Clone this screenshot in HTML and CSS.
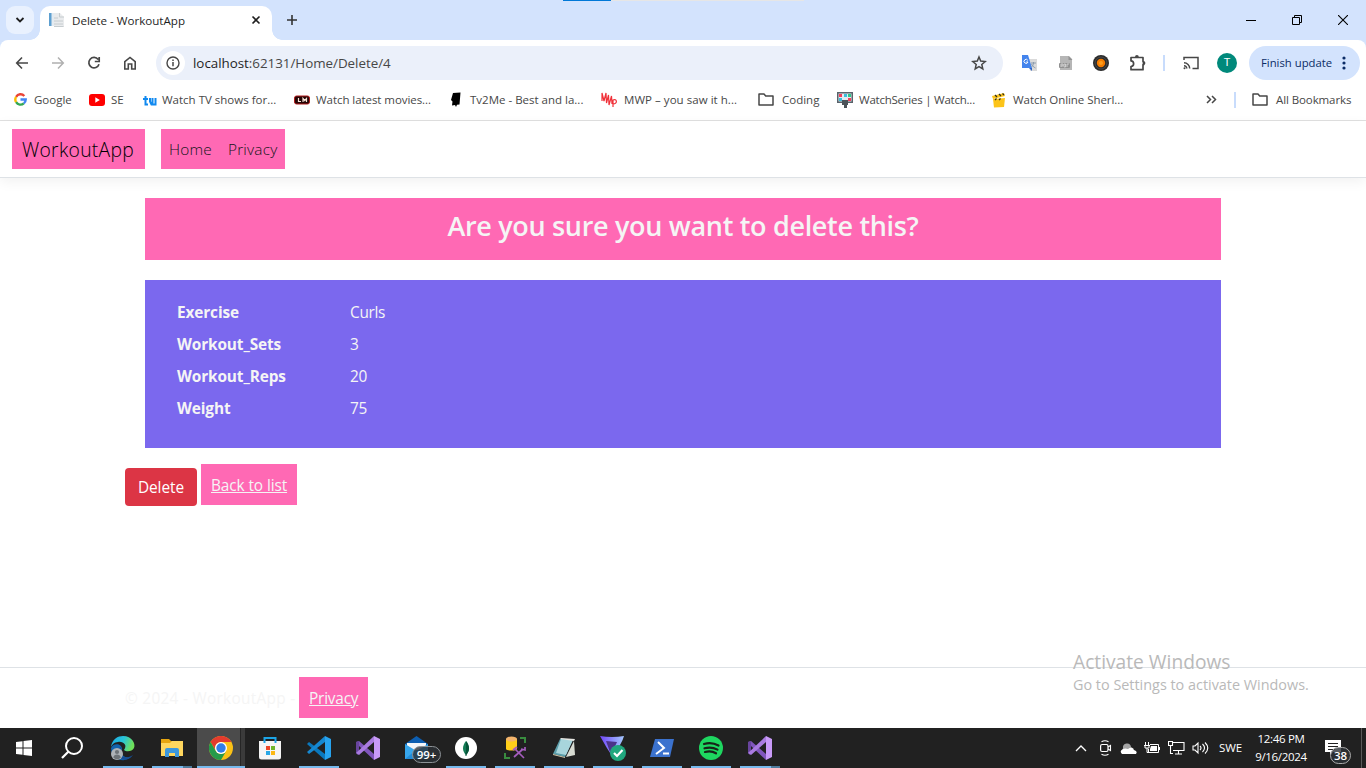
FILE: index.html
```html
<!DOCTYPE html>
<html lang="en">
<head>
<meta charset="utf-8">
<title>Delete - WorkoutApp</title>
<link rel="stylesheet" href="styles.css">
</head>
<body>
<div class="screen">
  <header class="tabstrip">
    <button class="tab-search" aria-label="Search tabs"><svg width="10" height="8" viewBox="0 0 10 8"><path d="M1.500 2 5 5.400 8.500 2" fill="none" stroke="#1f1f1f" stroke-width="1.800"/></svg></button>
    <div class="tab">
      <svg width="16" height="16" viewBox="0 0 16 16"><path d="M1 1h7v13H1z" fill="#e4ebf1"/><path d="M1 1h2.500v13H1z" fill="#5d9fd0"/><path d="M5 1h7l4 4v10H6V1" fill="#e9ebed"/><path d="M11.500 1v4H16M6 6h4M6 9h9M6 12h9M6 14.500h9.500" stroke="#c6cccf" fill="none"/></svg>
      <span class="tab-title">Delete - WorkoutApp</span>
      <svg class="tab-close" width="10" height="10" viewBox="0 0 10 10"><path d="m1.500 1.500 7 7m0-7-7 7" stroke="#1f1f1f" stroke-width="1.600"/></svg>
    </div>
    <svg class="new-tab" width="12" height="12" viewBox="0 0 12 12"><path d="M6 1v10M1 6h10" stroke="#333" stroke-width="1.600"/></svg>
    <div class="window-buttons">
      <svg width="10" height="10" viewBox="0 0 10 10"><path d="M0 5.500h10" stroke="#000"/></svg>
      <svg width="10" height="10" viewBox="0 0 10 10"><path d="M.5 2.500h7v7h-7zM2.500 2.500v-2h7v7h-2" fill="none" stroke="#000"/></svg>
      <svg width="10" height="10" viewBox="0 0 10 10"><path d="m0 0 10 10M10 0 0 10" stroke="#000" stroke-width="1.100"/></svg>
    </div>
    <div class="progress"></div>
  </header>

  <div class="toolbar">
    <nav class="nav-icons">
      <svg width="14" height="14" viewBox="0 0 14 14"><path d="M7 1.500 1.700 7 7 12.500M2 7h11" fill="none" stroke="#474747" stroke-width="1.600"/></svg>
      <svg width="14" height="14" viewBox="0 0 14 14"><path d="M7 1.500 12.300 7 7 12.500M12 7H1" fill="none" stroke="#b0b0b0" stroke-width="1.500"/></svg>
      <svg width="14" height="14" viewBox="0 0 14 14"><path d="M11.200 3.500A5.200 5.200 0 1 0 12 8.200M12.200 1v4.500H7.800" fill="none" stroke="#474747" stroke-width="1.700"/></svg>
      <svg width="14" height="14" viewBox="0 0 14 14"><path d="M1.800 13V5.700L7 1.500l5.200 4.200V13H8.700V8H5.300v5z" fill="none" stroke="#474747" stroke-width="1.600"/></svg>
    </nav>
    <div class="address">
      <span class="info"><svg width="14" height="14" viewBox="0 0 14 14"><circle cx="7" cy="7" r="6" fill="none" stroke="#474747" stroke-width="1.400"/><path d="M7 6v4.200M7 3.600v1.500" stroke="#474747" stroke-width="1.500"/></svg></span>
      <span class="url"><b>localhost</b>:62131/Home/Delete/4</span>
      <svg class="star" width="16" height="16" viewBox="0 0 16 16"><path d="m8 2 1.700 4.100 4.500.4-3.400 3 1 4.400L8 11.600l-3.800 2.300 1-4.400-3.400-3 4.500-.4z" fill="none" stroke="#474747" stroke-width="1.500"/></svg>
    </div>
    <div class="extensions">
      <svg width="17" height="17" viewBox="0 0 17 17"><path d="M7 4h9v12H9z" fill="#dadada"/><path d="M1 0h6l4 13H1z" fill="#4384ed"/><path d="m8 13 3 3v-3z" fill="#3065c4"/><path d="M6.800 5.300A2 2 0 1 0 7 7H5.200" fill="none" stroke="#fff" stroke-width="1"/><path d="M10 8h5m-2.500-1v1c0 2-1 3-2 4m0-3c1 2 2 3 4 4" stroke="#8c9cad" fill="none"/></svg>
      <svg width="16" height="16" viewBox="0 0 16 16"><path d="M2 1h9l3 3v11H2z" fill="#b6b6b6"/><path d="m10.500 1 4 4h-4z" fill="#929292"/><rect x="1" y="8" width="11" height="5" rx="1" fill="#909090"/><path d="M3 12V9h2v2H3M6 12V9h1.500v3H6M9 12V9h2" fill="none" stroke="#ddd" stroke-width=".8"/></svg>
      <svg width="16" height="16" viewBox="0 0 16 16"><circle cx="8" cy="8" r="8" fill="#2b2b2b"/><circle cx="8" cy="8" r="6" fill="none" stroke="#4a4a4a"/><circle cx="8" cy="8" r="4.200" fill="#f57c00"/><circle cx="8" cy="8" r="2" fill="#ff9d1c"/></svg>
      <svg width="18" height="18" viewBox="0 0 18 18"><path d="M2 3.500h12v4h.500v3.200H14v5H2v-3.200c3.500-.4 3.500-5.200 0-5.600z" fill="none" stroke="#474747" stroke-width="1.700" stroke-linejoin="round"/><path d="M6 3a1.900 1.900 0 0 1 3.800 0zM14.500 7.200a1.900 1.900 0 0 1 0 3.800z" fill="#474747"/></svg>
      <i class="sep"></i>
      <svg width="16" height="14" viewBox="0 0 16 14"><path d="M1 4V1.500h14v11H9.500M1 6.800a5.700 5.700 0 0 1 5.700 5.700M1 9.700a2.800 2.800 0 0 1 2.800 2.800" fill="none" stroke="#474747" stroke-width="1.500"/><circle cx="1.500" cy="12.300" r="1" fill="#474747"/></svg>
      <span class="avatar">T</span>
    </div>
    <div class="update"><span>Finish update</span><svg width="4" height="14" viewBox="0 0 4 14" fill="#0b2c66"><circle cx="2" cy="2" r="1.600"/><circle cx="2" cy="7" r="1.600"/><circle cx="2" cy="12" r="1.600"/></svg></div>
  </div>

  <div class="bookmarks">
    <div class="bm bm-google"><svg width="13" height="13" viewBox="0 0 13 13" fill="none" stroke-width="2.400"><path d="M2.100 3.800A5.100 5.100 0 0 1 10.300 3" stroke="#ea4335"/><path d="M2.100 3.800a5.200 5.200 0 0 0 0 5.400" stroke="#fbbc05"/><path d="M2.100 9.200a5.100 5.100 0 0 0 7.700 1.200" stroke="#34a853"/><path d="M6.500 6.500h5.200c0 1.700-.7 3-1.900 3.900" stroke="#4285f4"/></svg><span>Google</span></div>
    <div class="bm bm-se"><svg width="16" height="12" viewBox="0 0 16 12"><rect width="16" height="12" rx="3" fill="#f00"/><path d="m6.300 3.300 4.500 2.700-4.500 2.700z" fill="#fff"/></svg><span>SE</span></div>
    <div class="bm bm-tv"><svg class="low" width="14" height="10" viewBox="0 0 14 10" fill="none" stroke="#1089f0" stroke-width="2"><path d="M2.500 0v8.500H5M0 3h5M7 2v3.500l1.500 3L12.500 8.500V2M9.500 2v6"/></svg><span>Watch TV shows for...</span></div>
    <div class="bm bm-lm"><svg width="16" height="10" viewBox="0 0 16 10"><rect x=".5" y="1" width="15" height="8" rx="2" fill="#250505" stroke="#b01c1c"/><path d="M4.500 3v3.500H7M9 7V3.500l1.700 2 1.800-2V7" fill="none" stroke="#f7e5d8" stroke-width="1.200"/></svg><span>Watch latest movies...</span></div>
    <div class="bm bm-me"><svg width="16" height="16" viewBox="0 0 16 16"><path d="m5 1 7.500-.6-1 12-2.500.4-1 2.200-1-2-3 .4.500-4L3 8z" fill="#000"/></svg><span>Tv2Me - Best and la...</span></div>
    <div class="bm bm-mwp"><svg width="17" height="16" viewBox="0 0 17 16" fill="none" stroke="#f03038" stroke-width="1.200"><path d="M1 9V1l2 8 2-8 .5 10L7.500 3 8 13l2.500-9 .5 8M12 15V8c4-2 5 4 0 4"/></svg><span>MWP – you saw it h...</span></div>
    <div class="bm bm-coding"><svg width="16" height="13" viewBox="0 0 16 13"><path d="M1 1h5l1.700 2H15v9H1z" fill="none" stroke="#474747" stroke-width="1.500" stroke-linejoin="round"/></svg><span>Coding</span></div>
    <div class="bm bm-series"><svg width="16" height="16" viewBox="0 0 16 16"><path d="M0 0h16v11H0z" fill="#59636b"/><path d="M1.500 1.500h13v8h-13z" fill="#e2eaf0"/><path d="M2 2h3v3H2zM11 6h3v3h-3z" fill="#f33e5b"/><path d="M7 2h3v3H7zM2 6h3v3H2z" fill="#3bbcdc"/><path d="M11 2h3v3h-3z" fill="#2fc78a"/><path d="M5 8h6v5h-1v3H7v-3H5z" fill="#4b5359"/></svg><span>WatchSeries | Watch...</span></div>
    <div class="bm bm-online"><svg width="14" height="16" viewBox="0 0 14 16"><path d="m1 7 12-1-1 9-10 .5z" fill="#fcc419"/><path d="m0 4 12-3 1 3L1 7z" fill="#fcc419"/><path d="m3 3 2 2M7 2l2 2M10.500 1.500l1.500 1.500M3 8l1.500-1.500M7 8l1.500-1.500" stroke="#302b19" stroke-width="1.200"/></svg><span>Watch Online Sherl...</span></div>
    <svg class="more" width="11" height="9" viewBox="0 0 11 9"><path d="m1 1 3.500 3.500L1 8m5-7 3.500 3.500L6 8" fill="none" stroke="#474747" stroke-width="1.500"/></svg>
    <i class="sep"></i>
    <div class="bm bm-all"><svg width="16" height="13" viewBox="0 0 16 13"><path d="M1 1h5l1.700 2H15v9H1z" fill="none" stroke="#474747" stroke-width="1.500" stroke-linejoin="round"/></svg><span>All Bookmarks</span></div>
  </div>

  <div class="page">
    <nav class="navbar"><a class="brand">WorkoutApp</a><div class="nav-links"><a>Home</a><a>Privacy</a></div></nav>
    <main class="main">
      <h3 class="question">Are you sure you want to delete this?</h3>
      <dl class="details">
        <dt>Exercise</dt><dd>Curls</dd>
        <dt>Workout_Sets</dt><dd>3</dd>
        <dt>Workout_Reps</dt><dd>20</dd>
        <dt>Weight</dt><dd>75</dd>
      </dl>
      <div class="actions"><button class="delete">Delete</button><a class="pink-link back">Back to list</a></div>
    </main>
    <footer class="footer"><span>© 2024 - WorkoutApp -</span><a class="pink-link privacy">Privacy</a></footer>
    <div class="activate"><p class="activate-title">Activate Windows</p><p class="activate-text">Go to Settings to activate Windows.</p></div>
  </div>

  <div class="taskbar">
    <div class="apps">
      <div class="app start"><svg width="16" height="16" viewBox="0 0 16 16" fill="#fff"><path d="m0 2 6.500-.8v6.300H0zM7.500 1 16 0v7.500H7.500zM0 8.500h6.500v6.300L0 14zM7.500 8.500H16V16l-8.500-1z"/></svg></div>
      <div class="app search"><svg width="22" height="22" viewBox="0 0 22 22"><circle cx="13" cy="9" r="8" fill="none" stroke="#fff" stroke-width="2"/><path d="M7.300 14.700 1 21" stroke="#fff" stroke-width="2.200"/></svg></div>
      <div class="app open"><svg width="26" height="26" viewBox="0 0 26 26"><defs><linearGradient id="ea" x1="0" x2="1" y2=".3"><stop stop-color="#1ca8e5"/><stop offset=".55" stop-color="#28c4d9"/><stop offset="1" stop-color="#6fe05a"/></linearGradient></defs><path d="M1 13a12 12 0 0 0 20 9c-7 2-11-3-9-8 0-5-8-7-11-1z" fill="#1263ad"/><path d="M11 16c0 7 6 8 12 4-3 5-10 6-14 3-4-5-2-10 2-11z" fill="#174d93"/><path d="M1 12C2 4 8 1 13 1c9 0 13 8 11 12-2 4-8 4-10 2 4-5-1-9-6-8-4 0-6 3-7 5z" fill="url(#ea)"/><circle cx="7" cy="19" r="6" fill="#aeb3b7"/><circle cx="7" cy="17" r="2.100" fill="#6d7377"/><path d="M3.300 22.500c.5-4 7-4 7.500 0-2 2.400-5.500 2.400-7.500 0" fill="#6d7377"/></svg></div>
      <div class="app open multi"><svg width="22" height="20" viewBox="0 0 22 20"><path d="M0 1h8l2 2h11v15H0z" fill="#e7a610"/><path d="M0 5h9l2-2h11v15H0z" fill="#ffd75e"/><path d="M4 19v-7a2 2 0 0 1 2-2h10a2 2 0 0 1 2 2v7h-4v-4H8v4z" fill="#3d98dc"/></svg></div>
      <div class="app open active"><svg width="24" height="24" viewBox="0 0 24 24"><circle cx="12" cy="12" r="12" fill="#fbc116"/><path d="M1.600 6A12 12 0 0 1 22.400 6H12a6 6 0 0 0-5 9z" fill="#e33b2e"/><path d="M1.600 6A12 12 0 0 0 12 24l5.200-9A6 6 0 0 1 6.800 15z" fill="#259b4a"/><circle cx="12" cy="12" r="6" fill="#fff"/><circle cx="12" cy="12" r="4.700" fill="#327ee9"/></svg></div>
      <div class="app"><svg width="24" height="24" viewBox="0 0 24 24"><path d="M1 5h22v16q0 2.500-2.500 2.500h-17Q1 23.500 1 21z" fill="#f5f5f5"/><path d="M8 10h4v4H8z" fill="#ec4627"/><path d="M13 10h4v4h-4z" fill="#6fb52b"/><path d="M8 15h4v4H8z" fill="#28a7e6"/><path d="M13 15h4v4h-4z" fill="#fdb813"/><path d="M6.500 7V2h11v5" fill="none" stroke="#1ca5e7" stroke-width="2"/></svg></div>
      <div class="app open"><svg width="24" height="24" viewBox="0 0 24 24"><path d="m0 8 2-2 16 12v6z" fill="#0a78bd"/><path d="m0 16 2 2L18 6V0z" fill="#1688d1"/><path d="m18 0 6 3v18l-6 3z" fill="#27a3ee"/></svg></div>
      <div class="app"><svg width="24" height="24" viewBox="0 0 24 24"><path d="m0 6 3-1 15 13v6L3 10v5l-3 2z" fill="#8056bc"/><path d="M0 17V6l3-1v11l-1 3z" fill="#68449d"/><path d="m3 19-3-2L18 0v6z" fill="#a97be0"/><path d="m18 0 6 3v18l-6 3z" fill="#c89af8"/></svg></div>
      <div class="app mail"><svg width="25" height="24" viewBox="0 0 25 24"><path d="M1 8 12.500 0 24 8v15H1z" fill="#0d5fb2"/><path d="M3 7h19v10H3z" fill="#f4f7fa"/><path d="m1 8 11.500 7L24 8v15H1z" fill="#37a6ec"/><path d="m1 23 11-9h12v9z" fill="#218bd8"/></svg><span class="badge">99+</span></div>
      <div class="app open"><svg width="22" height="22" viewBox="0 0 22 22"><circle cx="11" cy="11" r="11" fill="#fff"/><path d="M11 4c4 5 4 10 0 14-4-4-4-9 0-14" fill="#137b54"/><path d="M11 4c4 5 4 10 0 14" fill="#07543a"/><path d="M11 15v4" stroke="#07543a"/></svg></div>
      <div class="app open"><svg width="24" height="24" viewBox="0 0 24 24"><path d="M3 3v10c0 2 11 2 11 0V3" fill="#ffcf1a"/><ellipse cx="8.500" cy="3" rx="5.500" ry="2.500" fill="#f3b46c"/><path d="M17 2h5v5M2 17v5h5" fill="none" stroke="#398d3f" stroke-width="2"/><path d="m11 21 9-8m-8 0 9 9M10 14l4-3M18 13l4 1v-3" stroke="#a45dbd" stroke-width="1.700" fill="none"/></svg></div>
      <div class="app open"><svg width="24" height="24" viewBox="0 0 24 24"><path d="M8 3 1 18l12 3 8-18z" fill="#5b9da9"/><path d="M9 3 4 17l10 2 7-15z" fill="#a8d5dc"/><path d="m9 2 14 1-1 2-14-2z" fill="#e6e6e2"/><path d="m22 5 1 14-9 2z" fill="#d7dbd2"/><path d="m1 18 12 3v1L1 19z" fill="#d2c6a9"/></svg></div>
      <div class="app open"><svg width="28" height="26" viewBox="0 0 28 26"><defs><linearGradient id="vp" x2="1"><stop stop-color="#7147fa"/><stop offset="1" stop-color="#a5c9ff"/></linearGradient></defs><path d="M1 1q12 2 24 0-2 8-12 20Q7 12 1 1" fill="url(#vp)"/><path d="m7 6 11 1-6 13z" fill="#4b348b"/><circle cx="19" cy="18" r="8" fill="#20a77e"/><path d="m15 18 3 3 5.500-6" fill="none" stroke="#fff" stroke-width="2.200"/></svg></div>
      <div class="app open"><svg width="24" height="20" viewBox="0 0 24 20"><path d="M5 1h19l-4 18H0z" fill="#3b72ce"/><path d="m8 4 6 6-8 6M13 15.500h6" fill="none" stroke="#fff" stroke-width="2"/></svg></div>
      <div class="app open"><svg width="24" height="24" viewBox="0 0 24 24"><circle cx="12" cy="12" r="12" fill="#1ed760"/><path d="M5 8c5-1.500 10-1 14.500 1.500M5.500 12.300c5-1.300 9-.8 13 1.300M6 16c4-1 8-.6 11 1.300" fill="none" stroke="#172319" stroke-width="2.200" stroke-linecap="round"/></svg></div>
      <div class="app open multi"><svg width="24" height="24" viewBox="0 0 24 24"><path d="m0 6 3-1 15 13v6L3 10v5l-3 2z" fill="#8056bc"/><path d="M0 17V6l3-1v11l-1 3z" fill="#68449d"/><path d="m3 19-3-2L18 0v6z" fill="#a97be0"/><path d="m18 0 6 3v18l-6 3z" fill="#c89af8"/></svg></div>
    </div>
    <div class="tray">
      <svg width="12" height="8" viewBox="0 0 12 8"><path d="m1 7 5-5 5 5" fill="none" stroke="#fff" stroke-width="1.300"/></svg>
      <svg width="12" height="16" viewBox="0 0 12 16"><rect x=".6" y="4.500" width="7.400" height="7" rx="1.500" fill="none" stroke="#fff" stroke-width="1.200"/><path d="m8 7 2.500-1.500v5L8 9M1.500 1.700q3.500-2 7 0M1.500 14.300q3.500 2 7 0" fill="none" stroke="#fff" stroke-width="1.100"/></svg>
      <svg width="17" height="11" viewBox="0 0 17 11"><path d="M3 5a4 4 0 0 1 8-1l3 2-8 4H2z" fill="#a5a5a5"/><path d="M2 11q-3-3 1-5 2-1 5 0 4-3 6 1 4 1 2 4z" fill="#fff"/></svg>
      <svg width="17" height="14" viewBox="0 0 17 14"><path d="M6 3.500h8.500v8H4.500V8M1.500 1v3M4.500 1v3M0 4.500h6M1 5v2h4V5M3 7v4.500h2" fill="none" stroke="#fff"/><path d="M7 5h6v5H6V8zM15 6h1v3h-1z" fill="#fff"/></svg>
      <svg width="17" height="14" viewBox="0 0 17 14"><path d="M5 1.500h11v8H5M.5.500h4v4h-4zM2.500 4.500v8H5M10.500 9.500v3M7 13h7" fill="none" stroke="#fff" stroke-width="1.100"/></svg>
      <svg width="17" height="14" viewBox="0 0 17 14"><path d="M1 5h2l3-3v10L3 9H1zM8 5q2 2 0 4M10.500 3q4 4 0 8M13 1.500q5.500 5.500 0 11" fill="none" stroke="#fff" stroke-width="1.100"/></svg>
      <span class="lang">SWE</span>
      <div class="clock"><span>12:46 PM</span><span>9/16/2024</span></div>
      <div class="notes"><svg width="16" height="16" viewBox="0 0 16 16"><path d="M0 0h16v12H8l-3 3v-3H0z" fill="#fff"/><path d="M3 3.500h10M3 6.500h10M3 9.500h7" stroke="#222"/></svg><span class="badge">38</span></div>
    </div>
  </div>
</div>
</body>
</html>
```
FILE: styles.css
```css
* { box-sizing: border-box; }
body { margin: 0; font-family: "Open Sans", sans-serif; overflow: hidden; }
svg { display: block; flex: none; }
button { border: 0; font: inherit; padding: 0; }
p, h3, dl, dd { margin: 0; }
.screen { width: 1366px; height: 768px; display: flex; flex-direction: column; background: #fff; overflow: hidden; }

/* Browser tabs */
.tabstrip { position: relative; height: 40px; flex: none; display: flex; align-items: center; background: #d3e3fd; padding-left: 6px; }
.tab-search { width: 28px; height: 28px; border-radius: 9px; background: #e9f1fe; display: grid; place-items: center; }
.tab { position: relative; width: 232px; height: 34px; margin: 6px 0 0 6px; border-radius: 10px 10px 0 0; background: #fff; display: flex; align-items: center; padding: 0 11px 6px 8px; }
.tab::before, .tab::after { content: ""; position: absolute; bottom: 0; width: 10px; height: 10px; }
.tab::before { left: -10px; background: radial-gradient(circle at 0 0, transparent 9.500px, #fff 10px); }
.tab::after { right: -10px; background: radial-gradient(circle at 100% 0, transparent 9.500px, #fff 10px); }
.tab-title { margin-left: 8px; font-size: 11.600px; color: #1f1f1f; white-space: nowrap; }
.tab-close { margin-left: auto; }
.new-tab { margin-left: 14px; }
.window-buttons { margin-left: auto; display: flex; gap: 36px; padding-right: 18px; }
.progress { position: absolute; left: 563px; top: 0; width: 241px; height: 1px; background: linear-gradient(90deg, #0078d7 48px, #e6e6e6 48px); }

/* Address row */
.toolbar { height: 46px; flex: none; display: flex; align-items: center; padding: 0 6px 0 15px; background: linear-gradient(#d3e3fd, #d3e3fd) 0 0 / 100% 10px no-repeat; position: relative; z-index: 0; }
.toolbar::before { content: ""; position: absolute; z-index: -1; inset: 0; background: #fff; border-radius: 8px 8px 0 0; }
.nav-icons { display: flex; gap: 22px; width: 141px; }
.address { width: 847px; height: 34px; border-radius: 17px; background: #ebf0fa; display: flex; align-items: center; padding: 0 16px 0 5px; }
.info { width: 24px; height: 24px; border-radius: 50%; background: #fff; display: grid; place-items: center; }
.url { margin-left: 8px; font-size: 13.400px; letter-spacing: -.03px; color: #474747; }
.url b { font-weight: 400; color: #1f1f1f; }
.star { margin-left: auto; }
.extensions { display: flex; align-items: center; margin-left: 18px; }
.extensions > :nth-child(2) { margin-left: 20px; }
.extensions > :nth-child(3) { margin-left: 19px; }
.extensions > :nth-child(4) { margin-left: 20px; }
.sep { width: 2px; height: 16px; background: #c8dcfc; flex: none; }
.extensions .sep { margin: 0 18px 0 16px; }
.avatar { width: 20px; height: 20px; margin-left: 18px; border-radius: 50%; background: #00897b; color: #fff; font: 11px/20px Roboto, sans-serif; text-align: center; }
.update { width: 111px; height: 34px; margin-left: auto; border-radius: 17px; background: #d3e3fd; color: #0b2c66; display: flex; align-items: center; justify-content: space-between; padding: 0 14px 1px 12px; font-size: 11.300px; white-space: nowrap; }

/* Bookmarks; each item reserves its own column */
.bookmarks { height: 35px; flex: none; display: flex; align-items: center; padding: 0 0 8px 14px; font-size: 11.500px; color: #474747; white-space: nowrap; }
.bm { display: flex; align-items: center; gap: 6px; flex: none; height: 16px; }
.bm-google { width: 75px; gap: 7px; }
.bm-se { width: 53px; }
.low { margin: 3px 0 0 1px; }
.bm-tv { width: 152px; gap: 5px; }
.bm-lm { width: 154px; letter-spacing: -.06px; }
.bm-me { width: 153px; }
.bm-mwp { width: 157px; letter-spacing: .04px; }
.bm-coding { width: 79px; gap: 8px; }
.bm-series { width: 155px; letter-spacing: -.23px; }
.bm-online { width: 214px; gap: 7px; letter-spacing: -.06px; }
.bm-all { margin-left: 16px; gap: 8px; letter-spacing: -.1px; }
.bookmarks .sep { margin-left: 17px; }

/* Site */
.page { position: relative; height: 608px; margin-top: -1px; border-top: 1px solid #e0e0e0; flex: none; color: #f5f5f5; font-size: 15.400px; line-height: 24px; display: flex; flex-direction: column; }
.navbar { height: 57px; flex: none; display: flex; align-items: center; padding: 0 12px; gap: 16px; border-bottom: 1px solid #dee2e6; box-shadow: 0 4px 12px rgba(0, 0, 0, .055); color: #14171a; font-weight: 350; }
.brand, .nav-links { background: #ff69b4; height: 40px; }
.brand { width: 133px; padding: 6px 10px; font-size: 19.300px; line-height: 30px; letter-spacing: .3px; color: #000; }
.nav-links { width: 124px; padding: 9px 8px; display: flex; gap: 16px; letter-spacing: .2px; white-space: nowrap; }
.main { width: 1116px; margin: 20px auto 0; }
.question { height: 62px; margin: 0 20px 20px; padding-top: 10px; background: #ff69b4; font-size: 27px; line-height: 36px; letter-spacing: -.32px; font-weight: 600; text-align: center; }
.details { height: 168px; margin: 0 20px; padding: 21px 32px; background: #7b68ee; display: grid; grid-template-columns: 173px 1fr; grid-auto-rows: 32px; align-content: start; line-height: 24px; }
.details dt { font-weight: 700; letter-spacing: -.12px; }
.details dd { letter-spacing: -.3px; }
.actions { display: flex; gap: 4px; padding-top: 16px; }
.delete { width: 72px; height: 38px; margin-top: 4px; padding-top: 2px; border-radius: 4px; background: #dc3545; color: #fff; letter-spacing: -.05px; }
.pink-link { background: #ff69b4; padding: 10px 10px 0; height: 41px; text-decoration: underline; white-space: nowrap; }
.back { width: 96px; letter-spacing: -.1px; }
.footer { height: 61px; flex: none; margin-top: auto; border-top: 1px solid #dee2e6; display: flex; padding: 9px 0 0 125px; }
.footer span { width: 174px; padding-top: 10px; letter-spacing: .28px; white-space: nowrap; }
.privacy { width: 69px; letter-spacing: -.2px; }
.activate { position: absolute; left: 1073px; top: 528px; color: #b9b9b9; white-space: nowrap; }
.activate-title { font-size: 19.200px; line-height: 26px; }
.activate-text { margin-top: 1px; font-size: 14.400px; line-height: 18px; }

/* Windows taskbar */
.taskbar { height: 40px; flex: none; display: flex; justify-content: space-between; background: #212121; }
.apps { display: flex; }
.app { position: relative; width: 49px; height: 40px; display: grid; place-items: center; }
.start { padding-right: 1px; }
.search { padding-right: 4px; }
.app.open { background: linear-gradient(#76b9ed, #76b9ed) 5px 38px / 40px 2px no-repeat; }
.app.multi::after { content: ""; position: absolute; right: 4px; bottom: 0; width: 9px; height: 2px; background: #4e7b9c; }
.app.active { width: 48px; margin-left: 1px; background: linear-gradient(#76b9ed, #76b9ed) 0 38px / 100% 2px no-repeat, #4b4b4b; }
.app.active::after { content: ""; position: absolute; top: 0; right: 0; width: 4px; height: 38px; background: #3b3b3b; border-left: 1px solid #262626; }
.badge { position: absolute; height: 17px; border: 1px solid #8d9296; border-radius: 9px; background: rgba(45, 50, 55, .8); color: #fff; font-size: 11.500px; line-height: 15px; font-weight: 600; text-align: center; }
.mail .badge { left: 20px; top: 18px; width: 29px; }
.tray { display: flex; align-items: center; color: #fff; font-size: 11.500px; width: 287px; border-right: 1px solid #5a5a5a; margin-right: 4px; flex: none; }
.tray > svg:nth-child(2) { margin-left: 13px; }
.tray > svg:nth-child(3) { margin-left: 8px; }
.tray > svg:nth-child(n+4) { margin-left: 7px; }
.lang { margin-left: 10px; letter-spacing: -.1px; padding-bottom: 1px; }
.clock { width: 60px; margin-left: 9px; display: flex; flex-direction: column; align-items: center; line-height: 18px; padding-bottom: 1px; letter-spacing: -.3px; }
.notes { position: relative; margin-left: 14px; }
.notes .badge { left: 5px; top: 7px; width: 21px; border-color: #aaa; }
```
